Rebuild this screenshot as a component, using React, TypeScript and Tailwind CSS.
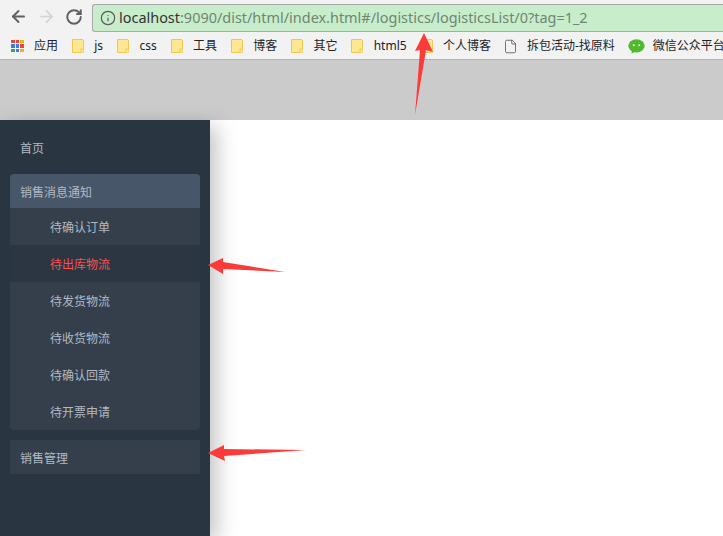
import { ArrowLeft, ArrowRight, RotateCw, Info, File } from 'lucide-react'

const bookmarks = ['js', 'css', '工具', '博客', '其它', 'html5', '个人博客']
const subItems = ['待确认订单', '待出库物流', '待发货物流', '待收货物流', '待确认回款', '待开票申请']

function FolderIcon() {
  return (
    <svg width="12" height="14" viewBox="0 0 12 14" className="shrink-0">
      <path d="M0.5 0.5H10.5L11.5 1.5V13.5H0.5Z" fill="#fde792" stroke="#eec650" />
      <rect x="9" y="10" width="3" height="4" fill="#fde792" stroke="#eec650" strokeWidth="0.8" />
    </svg>
  )
}

function AppsIcon() {
  const colors = ['#e8453c', '#e8453c', '#f4b400', '#3b7de8', '#3b7de8', '#e8453c', '#34a853', '#3b7de8', '#f4b400']
  return (
    <div className="grid grid-cols-3 gap-[1px] w-[13px] shrink-0">
      {colors.map((c, i) => (
        <span key={i} className="h-[3.6px] w-[3.6px]" style={{ backgroundColor: c }} />
      ))}
    </div>
  )
}

function WechatIcon() {
  return (
    <svg width="17" height="15" viewBox="0 0 17 15" className="shrink-0">
      <ellipse cx="8.5" cy="6.8" rx="8.2" ry="6.6" fill="#4fba2f" />
      <path d="M4 11 L3.6 14.6 L7.5 12.5 Z" fill="#4fba2f" />
      <circle cx="5.8" cy="6.2" r="1" fill="#fff" />
      <circle cx="11.2" cy="6.2" r="1" fill="#fff" />
    </svg>
  )
}

function Toolbar() {
  return (
    <div className="bg-[#f2f2f2] border-b border-[#b4b4b4] h-[60px] overflow-hidden">
      <div className="flex items-center h-[33px] pl-[9px]">
        <ArrowLeft size={19} strokeWidth={2.4} className="text-[#5f6061] shrink-0" />
        <ArrowRight size={19} strokeWidth={2.2} className="text-[#d4d4d4] ml-[9px] shrink-0" />
        <RotateCw size={18} strokeWidth={2.6} className="text-[#5f6061] ml-[9px] shrink-0" />
        <div className="ml-[9px] flex-1 h-[28px] mt-[2px] bg-[#c8edcb] border border-[#a9a9a9] rounded-l-[3px] border-r-0 flex items-center pl-[7px]">
          <Info size={16} strokeWidth={1.8} className="text-[#5a5a5a] shrink-0" />
          <span className="ml-[3px] text-[14.45px] font-['Noto_Sans',sans-serif] whitespace-nowrap text-[#6f8672]">
            <span className="text-[#333]">localhost</span>:9090/dist/html/index.html#/logistics/logisticsList/0?tag=1_2
          </span>
        </div>
      </div>
      <div className="flex items-center h-[26px] pl-[11px] text-[12px] text-[#222] whitespace-nowrap font-['Noto_Sans','Noto_Sans_CJK_SC',sans-serif]">
        <AppsIcon />
        <span className="ml-[10px] mr-[14px]">应用</span>
        {bookmarks.map((b) => (
          <div key={b} className="flex items-center gap-[10.25px] mr-[14px]">
            <FolderIcon />
            <span>{b}</span>
          </div>
        ))}
        <File size={15} strokeWidth={1.3} className="text-[#555] shrink-0 -ml-[2px]" />
        <span className="ml-[9px] mr-[13px]">拆包活动-找原料</span>
        <WechatIcon />
        <span className="ml-[8px]">微信公众平台</span>
      </div>
    </div>
  )
}

function Sidebar() {
  return (
    <aside className="relative w-[210px] h-full bg-[#2a3542] px-[10px] text-[12px] text-[#b1bac4] shadow-[6px_6px_20px_rgba(0,0,0,0.25)] font-['Noto_Sans_CJK_SC',sans-serif]">
      <div className="h-[54px] flex items-center pl-[10px] pt-[2px]">首页</div>
      <div className="rounded-[4px] overflow-hidden bg-[#353f4c]">
        <div className="h-[34px] flex items-center pl-[10px] pt-[2px] bg-[#485669]">销售消息通知</div>
        {subItems.map((item, i) => (
          <div
            key={item}
            className={
              i === 1
                ? 'h-[37px] flex items-center pl-[40px] bg-[#2c3643] text-[#ff4d4d]'
                : 'h-[37px] flex items-center pl-[40px]'
            }
          >
            {item}
          </div>
        ))}
      </div>
      <div className="mt-[10px] h-[34px] flex items-center pl-[10px] pt-[2px] bg-[#353f4c]">销售管理</div>
    </aside>
  )
}

function Arrows() {
  return (
    <svg width="723" height="536" viewBox="0 0 723 536" className="absolute inset-0 pointer-events-none">
      <polygon points="424,33 433,52 426,50 415,115 420,50 415,51" fill="#fc3a3a" />
      <polygon points="208,265 223,258 223,262 285,272 223,269 223,274" fill="#fc3a3a" />
      <polygon points="208,453 224,445 224,449 306,450 224,456 225,461" fill="#fc3a3a" />
    </svg>
  )
}

export default function App() {
  return (
    <div className="relative h-[536px] w-[723px] overflow-hidden bg-white">
      <Toolbar />
      <div className="h-[60px] bg-[#cbcbcb]" />
      <div className="h-[416px]">
        <Sidebar />
      </div>
      <Arrows />
    </div>
  )
}
